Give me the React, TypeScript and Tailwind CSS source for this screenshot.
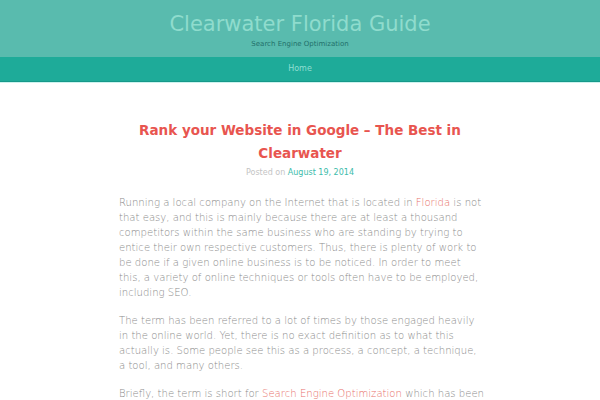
import React from 'react';

const App: React.FC = () => {
  return (
    <div className="min-h-[400px] bg-white font-['DejaVu_Sans',sans-serif]">
      <header className="bg-[#59bbae] pt-[11px] pb-[8px] text-center">
        <h1 className="text-[21px] leading-[26px] text-[#8fdccd]">Clearwater Florida Guide</h1>
        <p className="mt-[2px] text-[7px] leading-[10px] text-[#22706a]">Search Engine Optimization</p>
      </header>
      <nav className="h-[25px] bg-[#1eab99] border-b border-[#17998a] flex items-center justify-center">
        <a className="text-[8px] text-[#8fded2]">Home</a>
      </nav>
      <div className="h-px bg-[#cdf3ee]" />

      <main className="pt-[36px]">
        <h2 className="mx-auto w-[362px] text-center text-[13.5px] leading-[23px] font-bold text-[#e8554f]">
          Rank your Website in Google – The Best in Clearwater
        </h2>
        <div className="mt-[2px] text-center text-[8px] leading-[12px] text-[#c4c4c4]">
          Posted on <span className="text-[#3dbcab]">August 19, 2014</span>
        </div>

        <div className="ml-[119px] w-[366px] mt-[16px] text-[10.1px] leading-[15px] font-extralight text-[#8c8c8c] space-y-[13px]">
          <p>
            Running a local company on the Internet that is located in{' '}
            <span className="text-[#e8716b]">Florida</span> is not that easy, and this is mainly because there are at least a thousand competitors within the same business who are standing by trying to entice their own respective customers. Thus, there is plenty of work to be done if a given online business is to be noticed. In order to meet this, a variety of online techniques or tools often have to be employed, including SEO.
          </p>
          <p>
            The term has been referred to a lot of times by those engaged heavily in the online world. Yet, there is no exact definition as to what this actually is. Some people see this as a process, a concept, a technique, a tool, and many others.
          </p>
          <p>
            Briefly, the term is short for{' '}
            <span className="text-[#e8716b]">Search Engine Optimization</span> which has been around for quite some time now.
          </p>
        </div>
      </main>
    </div>
  );
};

export default App;
